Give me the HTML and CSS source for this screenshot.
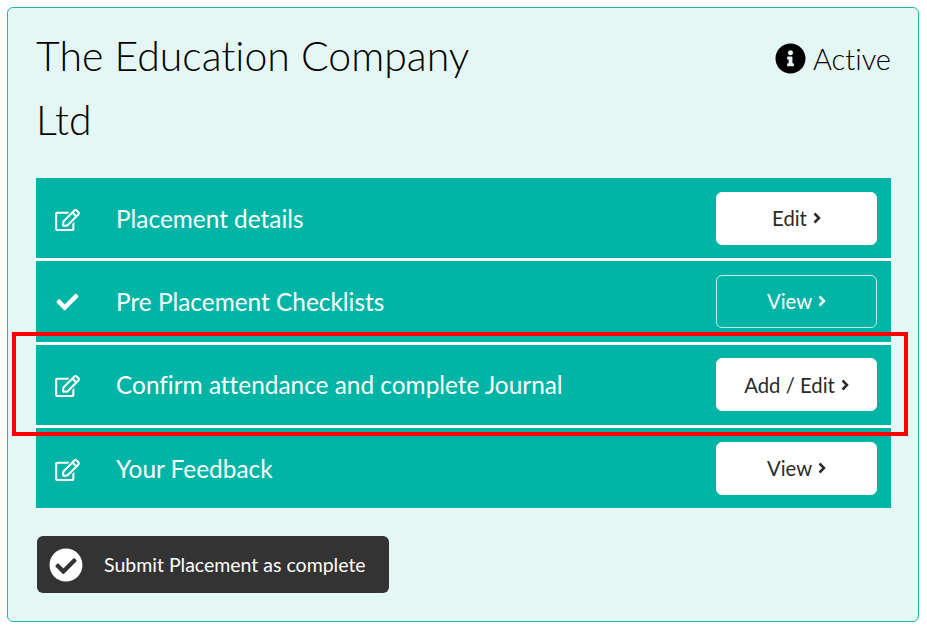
FILE: index.html
```html
<!DOCTYPE html>
<html lang="en">

<head>
    <meta charset="UTF-8">
    <meta name="viewport" content="width=device-width, initial-scale=1.0">
    <title>Placement</title>
    <link rel="stylesheet" href="styles.css">
</head>

<body>
    <div class="card">
        <div class="card-head">
            <h1>The Education Company Ltd</h1>
            <div class="status">
                <svg class="status-icon" viewBox="0 0 512 512"><path d="M256 8C119.043 8 8 119.083 8 256c0 136.997 111.043 248 248 248s248-111.003 248-248C504 119.083 392.957 8 256 8zm0 110c23.196 0 42 18.804 42 42s-18.804 42-42 42-42-18.804-42-42 18.804-42 42-42zm56 254c0 6.627-5.373 12-12 12h-88c-6.627 0-12-5.373-12-12v-24c0-6.627 5.373-12 12-12h12v-64h-12c-6.627 0-12-5.373-12-12v-24c0-6.627 5.373-12 12-12h64c6.627 0 12 5.373 12 12v100h12c6.627 0 12 5.373 12 12v24z"/></svg>
                <span>Active</span>
            </div>
        </div>

        <ul class="steps">
            <li class="step">
                <svg class="step-icon" viewBox="0 0 576 512"><path d="M402.300 344.900l32-32c5-5 13.700-1.500 13.700 5.700V464c0 26.500-21.500 48-48 48H48c-26.500 0-48-21.500-48-48V112c0-26.500 21.500-48 48-48h273.500c7.100 0 10.700 8.600 5.700 13.700l-32 32c-1.500 1.500-3.500 2.300-5.700 2.300H48v352h352V350.500c0-2.100.8-4.100 2.300-5.600zm156.600-201.800L296.300 405.700l-90.400 10c-26.200 2.900-48.500-19.200-45.600-45.600l10-90.400L432.900 17.100c22.900-22.900 59.900-22.900 82.700 0l43.200 43.200c22.900 22.900 22.900 60 .1 82.800zM460.100 174L402 115.900 216.200 301.800l-7.300 65.300 65.300-7.300L460.100 174zm64.800-79.700l-43.200-43.200c-4.100-4.100-10.800-4.100-14.800 0L436 82l58.100 58.100 30.900-30.900c4-4.200 4-10.800-.1-14.900z"/></svg>
                <span class="step-name">Placement details</span>
                <button type="button" class="btn">Edit <svg class="chevron" viewBox="0 0 8 12"><path d="M1.500 1.500 6 6l-4.500 4.500"/></svg></button>
            </li>
            <li class="step">
                <svg class="step-icon step-icon-check" viewBox="0 0 512 512"><path d="M173.898 439.404l-166.400-166.400c-9.997-9.997-9.997-26.206 0-36.204l36.203-36.204c9.997-9.998 26.207-9.998 36.204 0L192 312.690 432.095 72.596c9.997-9.997 26.207-9.997 36.204 0l36.203 36.204c9.997 9.997 9.997 26.206 0 36.204l-294.400 294.401c-9.998 9.997-26.207 9.997-36.204-.001z"/></svg>
                <span class="step-name">Pre Placement Checklists</span>
                <button type="button" class="btn btn-outline">View <svg class="chevron" viewBox="0 0 8 12"><path d="M1.500 1.500 6 6l-4.500 4.500"/></svg></button>
            </li>
            <li class="step">
                <svg class="step-icon" viewBox="0 0 576 512"><path d="M402.300 344.900l32-32c5-5 13.700-1.500 13.700 5.700V464c0 26.500-21.500 48-48 48H48c-26.500 0-48-21.500-48-48V112c0-26.500 21.500-48 48-48h273.500c7.100 0 10.700 8.600 5.700 13.700l-32 32c-1.500 1.500-3.500 2.300-5.700 2.300H48v352h352V350.500c0-2.100.8-4.100 2.300-5.600zm156.600-201.800L296.300 405.700l-90.400 10c-26.200 2.900-48.500-19.200-45.600-45.600l10-90.400L432.900 17.100c22.900-22.900 59.900-22.900 82.700 0l43.200 43.200c22.900 22.900 22.900 60 .1 82.800zM460.100 174L402 115.900 216.200 301.800l-7.300 65.300 65.300-7.300L460.100 174zm64.800-79.700l-43.200-43.200c-4.100-4.100-10.800-4.100-14.800 0L436 82l58.100 58.100 30.900-30.900c4-4.200 4-10.800-.1-14.900z"/></svg>
                <span class="step-name">Confirm attendance and complete Journal</span>
                <button type="button" class="btn">Add / Edit <svg class="chevron" viewBox="0 0 8 12"><path d="M1.500 1.500 6 6l-4.500 4.500"/></svg></button>
            </li>
            <li class="step">
                <svg class="step-icon" viewBox="0 0 576 512"><path d="M402.300 344.900l32-32c5-5 13.700-1.500 13.700 5.700V464c0 26.500-21.500 48-48 48H48c-26.500 0-48-21.500-48-48V112c0-26.500 21.500-48 48-48h273.500c7.100 0 10.700 8.600 5.700 13.700l-32 32c-1.500 1.500-3.500 2.300-5.700 2.300H48v352h352V350.500c0-2.100.8-4.100 2.300-5.600zm156.600-201.800L296.300 405.700l-90.400 10c-26.200 2.900-48.500-19.200-45.600-45.600l10-90.400L432.900 17.100c22.900-22.900 59.900-22.900 82.700 0l43.200 43.200c22.900 22.900 22.900 60 .1 82.800zM460.100 174L402 115.900 216.200 301.800l-7.300 65.300 65.300-7.300L460.100 174zm64.800-79.700l-43.200-43.200c-4.100-4.100-10.800-4.100-14.800 0L436 82l58.100 58.100 30.900-30.900c4-4.200 4-10.800-.1-14.900z"/></svg>
                <span class="step-name">Your Feedback</span>
                <button type="button" class="btn">View <svg class="chevron" viewBox="0 0 8 12"><path d="M1.500 1.500 6 6l-4.500 4.500"/></svg></button>
            </li>
        </ul>

        <button type="button" class="submit-btn">
            <svg class="submit-icon" viewBox="0 0 512 512"><path d="M504 256c0 136.967-111.033 248-248 248S8 392.967 8 256 119.033 8 256 8s248 111.033 248 248zM227.314 387.314l184-184c6.248-6.248 6.248-16.379 0-22.627l-22.627-22.627c-6.248-6.249-16.379-6.249-22.628 0L216 308.118l-70.059-70.059c-6.248-6.248-16.379-6.248-22.628 0l-22.627 22.627c-6.248 6.248-6.248 16.379 0 22.627l104 104c6.249 6.249 16.379 6.249 22.628.001z"/></svg>
            <span>Submit Placement as complete</span>
        </button>
    </div>

    <!-- annotation box drawn over the third row -->
    <div class="highlight"></div>
</body>

</html>
```

FILE: styles.css
```css
body {
    font-family: Lato, "Open Sans", sans-serif;
    font-variant-ligatures: none;
    background-color: #fff;
    margin: 0;
    padding: 7px 8px 0 7px;
    color: #000;
}

.card {
    height: 615px;
    box-sizing: border-box;
    padding: 0 27px 0 28px;
    background-color: #e5f7f5;
    border: 1px solid #1db8a9;
    border-radius: 6px;
}

.card-head {
    display: flex;
    justify-content: space-between;
    align-items: flex-start;
    height: 170px;
    padding-top: 16px;
    box-sizing: border-box;
}

h1 {
    width: 450px;
    margin: 0;
    font-size: 41px;
    font-weight: 300;
    line-height: 64px;
}

.status {
    display: flex;
    align-items: center;
    gap: 7px;
    height: 68px;
    font-size: 29px;
    font-weight: 300;
}

.status-icon {
    width: 31px;
    height: 31px;
}

.steps {
    list-style: none;
    margin: 0;
    padding: 0;
    background-color: #fff;
}

.step {
    display: flex;
    align-items: center;
    height: 83.33px;
    box-sizing: border-box;
    padding: 0 14px 0 19px;
    background-color: #00b5a5;
    border-top: 3px solid #fff;
    color: #fff;
}

.step:first-child {
    height: 80.33px;
    border-top: none;
}

.step-icon {
    width: 25px;
    height: 22px;
    margin-top: 3px;
    fill: #fff;
}

.step-icon-check {
    margin-top: 1px;
}

.step-name {
    flex: 1;
    margin-left: 36px;
    font-size: 24.4px;
}

.btn {
    display: flex;
    align-items: center;
    justify-content: center;
    gap: 6px;
    width: 161px;
    height: 53px;
    padding: 0;
    background-color: #fff;
    border: 1px solid #fff;
    border-radius: 6px;
    color: #2a2a2a;
    font-family: inherit;
    font-size: 20.3px;
}

.btn-outline {
    background-color: #00b5a5;
    border-color: #c5ece8;
    color: #fff;
}

.chevron {
    width: 8px;
    height: 12px;
    fill: none;
    stroke: currentColor;
    stroke-width: 2.5;
}

.submit-btn {
    display: flex;
    align-items: center;
    width: 352px;
    height: 57px;
    margin: 28px 0 0 1px;
    padding: 0 0 0 12px;
    background-color: #333;
    border: none;
    border-radius: 6px;
    color: #fff;
    font-family: inherit;
    font-size: 19.5px;
}

.submit-icon {
    width: 34px;
    height: 34px;
    fill: #fff;
}

.submit-btn span {
    margin-left: 21px;
}

.highlight {
    position: absolute;
    left: 12px;
    top: 332px;
    width: 888px;
    height: 96px;
    border: 4px solid #f00;
}
```
